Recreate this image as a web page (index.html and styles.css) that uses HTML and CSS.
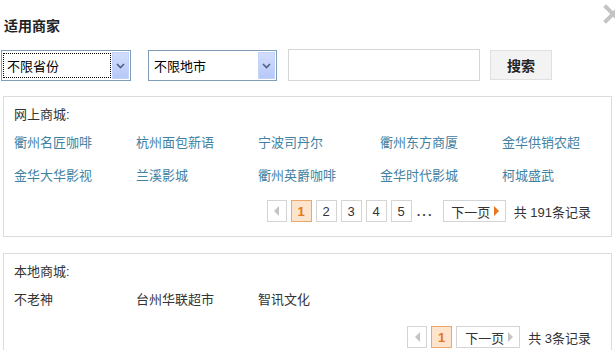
FILE: index.html
```html
<!DOCTYPE html>
<html lang="zh-CN">
<head>
  <meta charset="UTF-8">
  <title>适用商家</title>
  <link rel="stylesheet" href="styles.css">
</head>
<body>
  <div class="dialog">
    <a class="close" href="#" title="关闭">
      <svg width="20" height="20" viewBox="0 0 20 20"><path d="M3 3 L17 17 M17 3 L3 17" stroke="#c4c4c4" stroke-width="4" stroke-linecap="square"/></svg>
    </a>

    <h1 class="title">适用商家</h1>

    <div class="toolbar">
      <div class="select select-prov">
        <span class="select-text focused">不限省份</span>
        <span class="select-btn"><svg width="9" height="6" viewBox="0 0 9 6"><path d="M1 1 L4.5 4.5 L8 1" fill="none" stroke="#4d6185" stroke-width="1.6"/></svg></span>
      </div>
      <div class="select select-city">
        <span class="select-text">不限地市</span>
        <span class="select-btn"><svg width="9" height="6" viewBox="0 0 9 6"><path d="M1 1 L4.5 4.5 L8 1" fill="none" stroke="#4d6185" stroke-width="1.6"/></svg></span>
      </div>
      <input class="keyword" type="text">
      <button class="search-btn">搜索</button>
    </div>

    <!-- 网上商城 -->
    <div class="shop-box">
      <div class="shop-label">网上商城:</div>
      <ul class="shop-list">
        <li><a href="#">衢州名匠咖啡</a></li>
        <li><a href="#">杭州面包新语</a></li>
        <li><a href="#">宁波司丹尔</a></li>
        <li><a href="#">衢州东方商厦</a></li>
        <li><a href="#">金华供销农超</a></li>
        <li><a href="#">金华大华影视</a></li>
        <li><a href="#">兰溪影城</a></li>
        <li><a href="#">衢州英爵咖啡</a></li>
        <li><a href="#">金华时代影城</a></li>
        <li><a href="#">柯城盛武</a></li>
      </ul>
      <div class="pager">
        <span class="pg pg-prev"><i class="tri-left"></i></span>
        <span class="pg pg-cur">1</span>
        <a class="pg" href="#">2</a>
        <a class="pg" href="#">3</a>
        <a class="pg" href="#">4</a>
        <a class="pg" href="#">5</a>
        <span class="pg-dots">...</span>
        <a class="pg pg-next" href="#">下一页<i class="tri-right"></i></a>
        <span class="pg-total">共 191条记录</span>
      </div>
    </div>

    <!-- 本地商城 -->
    <div class="shop-box local">
      <div class="shop-label">本地商城:</div>
      <ul class="shop-list">
        <li>不老神</li>
        <li>台州华联超市</li>
        <li>智讯文化</li>
      </ul>
      <div class="pager">
        <span class="pg pg-prev"><i class="tri-left"></i></span>
        <span class="pg pg-cur">1</span>
        <span class="pg pg-next disabled">下一页<i class="tri-right"></i></span>
        <span class="pg-total">共 3条记录</span>
      </div>
    </div>
  </div>
</body>
</html>
```

FILE: styles.css
```css
body {
  margin: 0;
  background: #fff;
  font-family: "Liberation Sans", "Noto Sans CJK SC", sans-serif;
  font-size: 13px;
  color: #333;
  overflow: hidden;
}

.dialog {
  position: relative;
  width: 615px;
}

.close {
  position: absolute;
  top: 4px;
  right: -8px;
  display: block;
  width: 20px;
  height: 20px;
}

.title {
  margin: 0;
  padding: 18px 0 0 4px;
  height: 32px;
  box-sizing: border-box;
  font-size: 14px;
  line-height: 16px;
  font-weight: bold;
  color: #222;
}

/* 搜索栏 */
.toolbar {
  display: flex;
  align-items: flex-start;
  padding-left: 1px;
  height: 31px;
  margin-top: 18px;
}

.select {
  display: flex;
  height: 31px;
  box-sizing: border-box;
  border: 1px solid #7f9db9;
  background: #fff;
}

.select-prov { width: 130px; }
.select-city { width: 129px; margin-left: 17px; }

.select-text {
  flex: 1;
  margin: 2px 1px 2px 1px;
  padding-left: 3px;
  line-height: 25px;
  font-size: 13px;
  color: #000;
  border: 1px solid transparent;
}

.select-text.focused {
  border: 1px dotted #000;
}

.select-btn {
  width: 17px;
  margin: 1px 1px 1px 0;
  display: flex;
  align-items: center;
  justify-content: center;
  background: linear-gradient(#d3defd, #b5c8f6);
  border: 1px solid #c3d3fb;
  box-sizing: border-box;
}

.keyword {
  width: 192px;
  height: 32px;
  margin: -1px 0 0 11px;
  box-sizing: border-box;
  border: 1px solid #d6d6d6;
  padding: 0 4px;
  outline: none;
}

.search-btn {
  width: 62px;
  height: 30px;
  margin-left: 10px;
  border: 1px solid #e0e0e0;
  background: #f3f3f3;
  font-family: "Noto Sans CJK SC", sans-serif;
  font-size: 14px;
  font-weight: bold;
  color: #222;
  padding: 0;
}

/* 商城列表 */
.shop-box {
  width: 609px;
  margin: 15px 0 0 3px;
  box-sizing: border-box;
  border: 1px solid #dcdcdc;
  padding: 8px 20px 14px 10px;
}

.shop-box.local {
  margin-top: 16px;
  height: 110px;
}

.shop-label {
  line-height: 20px;
  color: #333;
}

.shop-list {
  list-style: none;
  margin: 8px 0 0;
  padding: 0;
  display: grid;
  grid-template-columns: repeat(5, 122px);
  row-gap: 13px;
}

.shop-list li {
  line-height: 20px;
  white-space: nowrap;
}

.shop-list a {
  color: #3f82a3;
  text-decoration: none;
}

/* 分页 */
.pager {
  display: flex;
  justify-content: flex-end;
  align-items: center;
  margin-top: 14px;
  height: 22px;
}

.local .pager {
  margin-top: 16px;
}

.pg {
  display: flex;
  align-items: center;
  justify-content: center;
  min-width: 21px;
  height: 22px;
  box-sizing: border-box;
  margin-left: 4px;
  border: 1px solid #d4d4d4;
  background: #fff;
  color: #333;
  font-size: 13px;
  text-decoration: none;
}

.pg-prev { width: 20px; min-width: 20px; }

.pg-cur {
  background: #fde5cd;
  border-color: #eca76a;
  color: #e8741c;
  font-weight: bold;
}

.pg-dots {
  width: 22px;
  margin-left: 5px;
  letter-spacing: 2px;
  font-weight: bold;
  color: #444;
  text-align: left;
}

.pg-next {
  width: 63px;
  margin-left: 4px;
  padding-left: 2px;
}

.local .pg-next { width: 64px; }

.tri-left, .tri-right {
  display: inline-block;
  width: 0;
  height: 0;
  border-top: 5px solid transparent;
  border-bottom: 5px solid transparent;
}

.tri-left {
  border-right: 5px solid #c4c4c4;
}

.tri-right {
  margin-left: 4px;
  border-left: 5px solid #e8741c;
}

.disabled .tri-right {
  border-left-color: #c4c4c4;
}

.pg-total {
  margin-left: 8px;
  color: #333;
}
```
